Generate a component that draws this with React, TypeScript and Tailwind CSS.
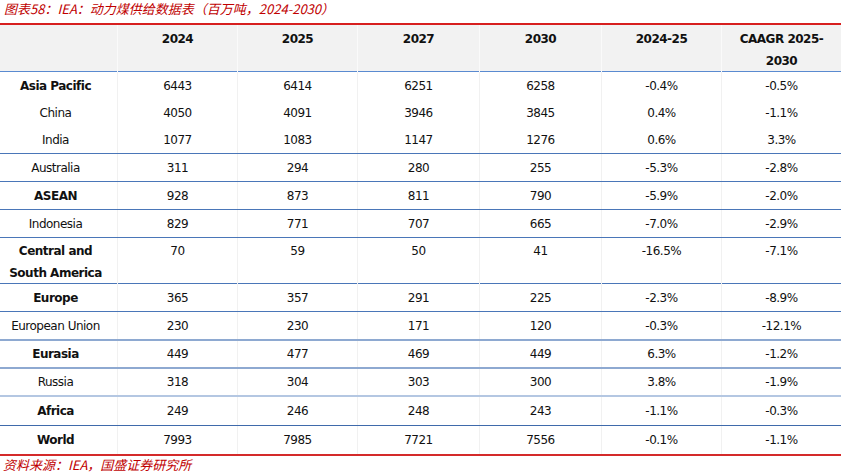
const rows: {
  name: string[];
  bold?: boolean;
  v: string[];
  line?: string;
  h: string;
}[] = [
  { name: ["Asia Pacific"], bold: true, v: ["6443", "6414", "6251", "6258", "-0.4%", "-0.5%"], h: "h-[27px]" },
  { name: ["China"], v: ["4050", "4091", "3946", "3845", "0.4%", "-1.1%"], h: "h-[27px]" },
  { name: ["India"], v: ["1077", "1083", "1147", "1276", "0.6%", "3.3%"], line: "border-b border-[#4a76b8]", h: "h-[28px]" },
  { name: ["Australia"], v: ["311", "294", "280", "255", "-5.3%", "-2.8%"], line: "border-b border-[#4a76b8]", h: "h-[28px]" },
  { name: ["ASEAN"], bold: true, v: ["928", "873", "811", "790", "-5.9%", "-2.0%"], line: "border-b border-[#4a76b8]", h: "h-[28px]" },
  { name: ["Indonesia"], v: ["829", "771", "707", "665", "-7.0%", "-2.9%"], line: "border-b border-[#4a76b8]", h: "h-[28px]" },
  {
    name: ["Central and", "South America"],
    bold: true,
    v: ["70", "59", "50", "41", "-16.5%", "-7.1%"],
    line: "border-b border-[#4a76b8]",
    h: "h-[46px]",
  },
  { name: ["Europe"], bold: true, v: ["365", "357", "291", "225", "-2.3%", "-8.9%"], line: "border-b border-[#4a76b8]", h: "h-[28px]" },
  { name: ["European Union"], v: ["230", "230", "171", "120", "-0.3%", "-12.1%"], line: "border-b-2 border-[#8ea9d1]", h: "h-[29px]" },
  { name: ["Eurasia"], bold: true, v: ["449", "477", "469", "449", "6.3%", "-1.2%"], line: "border-b-2 border-[#8ea9d1]", h: "h-[28px]" },
  { name: ["Russia"], v: ["318", "304", "303", "300", "3.8%", "-1.9%"], line: "border-b-2 border-[#b4c7e2]", h: "h-[28px]" },
  { name: ["Africa"], bold: true, v: ["249", "246", "248", "243", "-1.1%", "-0.3%"], line: "border-b border-[#3f6aab]", h: "h-[29px]" },
  { name: ["World"], bold: true, v: ["7993", "7985", "7721", "7556", "-0.1%", "-1.1%"], line: "border-b-2 border-[#d42a2a]", h: "h-[30px]" },
];

const cols = "grid grid-cols-[117px_120px_120px_122px_122px_120px_120px]";

export default function App() {
  return (
    <div className="w-[866px] h-[475px] bg-white font-['DejaVu_Sans',sans-serif] text-[12px] tracking-[-0.5px] text-[#111]">
      {/* caption */}
      <div className="h-[23px] pl-[4px] pt-[1px] text-[13px] leading-[16px] italic tracking-normal text-[#c00000] font-['Noto_Sans_CJK_SC',sans-serif]">
        图表58：IEA：动力煤供给数据表（百万吨，2024-2030）
      </div>

      <div className="w-[841px]">
        {/* header */}
        <div className={`${cols} h-[49px] bg-[#f2f2f2] border-t-2 border-[#d71f1f] border-b border-b-[#5a8ad0] font-bold`}>
          <div />
          {["2024", "2025", "2027", "2030", "2024-25"].map((h) => (
            <div key={h} className="border-l border-[#fafafa] text-center pt-[3px] leading-[22px]">
              {h}
            </div>
          ))}
          <div className="border-l border-[#fafafa] text-center pt-[3px] leading-[22px]">
            CAAGR 2025-
            <br />
            2030
          </div>
        </div>

        {/* body */}
        {rows.map((r) => {
          const two = r.name.length > 1;
          return (
            <div key={r.name.join(" ")} className={`${cols} ${r.h} ${r.line ?? ""}`}>
              <div
                className={`flex flex-col items-center pr-[6px] leading-[22px] ${
                  r.bold ? "font-bold" : ""
                } ${two ? "pt-[2px]" : "justify-center"}`}
              >
                {r.name.map((n) => (
                  <span key={n} className="whitespace-nowrap">
                    {n}
                  </span>
                ))}
              </div>
              {r.v.map((v, i) => (
                <div
                  key={i}
                  className={`border-l border-[#f1f1f1] text-center leading-[22px] ${
                    two ? "pt-[2px]" : "flex items-center justify-center"
                  }`}
                >
                  {v}
                </div>
              ))}
            </div>
          );
        })}
      </div>

      {/* source */}
      <div className="pl-[3px] pt-[1px] text-[13px] leading-[16px] italic tracking-normal text-[#c00000] font-['Noto_Sans_CJK_SC',sans-serif]">
        资料来源：IEA，国盛证券研究所
      </div>
    </div>
  );
}
